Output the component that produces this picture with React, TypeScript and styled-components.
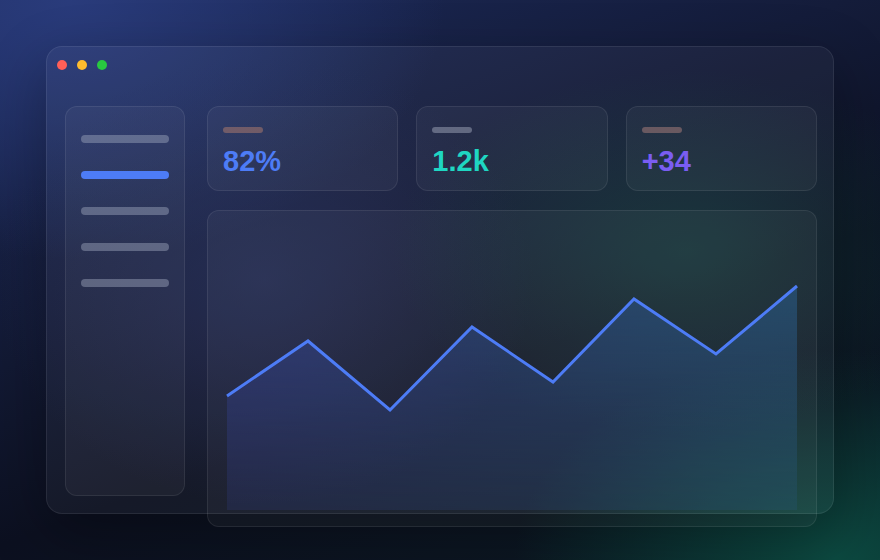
import styled, { createGlobalStyle } from "styled-components";

const GlobalStyle = createGlobalStyle`
  html, body {
    margin: 0;
    padding: 0;
  }
  body {
    font-family: "Liberation Sans", Arial, sans-serif;
  }
`;

const stats = [
  { value: "82%", color: "#4d7cf6", tag: "rgba(170, 120, 110, 0.55)" },
  { value: "1.2k", color: "#1fd6c2", tag: "rgba(160, 165, 185, 0.5)" },
  { value: "+34", color: "#7a5df2", tag: "rgba(175, 130, 125, 0.5)" },
];

const navItems = [false, true, false, false, false];

const points: [number, number][] = [
  [20, 186],
  [101, 131],
  [183, 200],
  [265, 117],
  [346, 172],
  [427, 89],
  [509, 144],
  [590, 76],
];

export default function App() {
  const line = points.map(([x, y]) => `${x},${y}`).join(" ");
  const area = `M20,300 L${line.replace(/ /g, " L")} L590,300 Z`;

  return (
    <>
      <GlobalStyle />
      <Page>
        <Window>
          <TitleBar>
            <Dot $color="#ff5f57" />
            <Dot $color="#febc2e" />
            <Dot $color="#28c840" />
          </TitleBar>
          <Body>
            <Sidebar>
              {navItems.map((active, i) => (
                <NavBar key={i} $active={active} />
              ))}
            </Sidebar>
            <Main>
              <StatRow>
                {stats.map((s) => (
                  <StatCard key={s.value}>
                    <StatTag $color={s.tag} />
                    <StatValue $color={s.color}>{s.value}</StatValue>
                  </StatCard>
                ))}
              </StatRow>
              <ChartCard>
                <svg width="610" height="317" viewBox="0 0 610 317">
                  <defs>
                    <linearGradient id="fillH" x1="0" y1="0" x2="1" y2="0">
                      <stop offset="0" stopColor="#34408a" />
                      <stop offset="1" stopColor="#2a5a86" />
                    </linearGradient>
                    <linearGradient id="fade" x1="0" y1="0" x2="0" y2="1">
                      <stop offset="0" stopColor="#fff" stopOpacity="0.75" />
                      <stop offset="1" stopColor="#fff" stopOpacity="0.2" />
                    </linearGradient>
                    <mask id="fadeMask">
                      <rect x="0" y="0" width="610" height="317" fill="url(#fade)" />
                    </mask>
                  </defs>
                  <path d={area} fill="url(#fillH)" mask="url(#fadeMask)" />
                  <polyline
                    points={line}
                    fill="none"
                    stroke="#4d7cf6"
                    strokeWidth="3"
                    strokeLinejoin="miter"
                  />
                </svg>
              </ChartCard>
            </Main>
          </Body>
        </Window>
      </Page>
    </>
  );
}

const Page = styled.main`
  width: 880px;
  height: 560px;
  box-sizing: border-box;
  padding: 46px;
  overflow: hidden;
  background:
    radial-gradient(ellipse 420px 260px at 78% 45%, rgba(20, 70, 66, 0.55), transparent 70%),
    radial-gradient(ellipse 360px 300px at 30% 50%, rgba(36, 44, 90, 0.6), transparent 75%),
    radial-gradient(ellipse 520px 360px at 8% 0%, rgba(42, 60, 125, 0.95), transparent 72%),
    radial-gradient(ellipse 460px 300px at 95% 100%, rgba(12, 76, 66, 0.95), transparent 70%),
    linear-gradient(160deg, #1e2c5e 0%, #141c3a 35%, #0c1020 62%, #0b1a22 100%);
`;

const Window = styled.section`
  height: 468px;
  box-sizing: border-box;
  border-radius: 16px;
  border: 1px solid rgba(255, 255, 255, 0.08);
  background: rgba(255, 255, 255, 0.04);
  box-shadow: 0 20px 60px rgba(0, 0, 0, 0.3);
`;

const TitleBar = styled.div`
  display: flex;
  align-items: center;
  gap: 10px;
  padding: 12px 10px;
  height: 35px;
  box-sizing: border-box;
`;

const Dot = styled.span<{ $color: string }>`
  width: 10px;
  height: 10px;
  border-radius: 50%;
  background: ${({ $color }) => $color};
`;

const Body = styled.div`
  display: grid;
  grid-template-columns: 120px 610px;
  gap: 22px;
  height: 390px;
  padding: 24px 0 0 18px;
  align-items: start;
`;

const Sidebar = styled.nav`
  height: 390px;
  box-sizing: border-box;
  padding: 28px 15px;
  display: flex;
  flex-direction: column;
  gap: 28px;
  border-radius: 12px;
  border: 1px solid rgba(255, 255, 255, 0.08);
  background: rgba(255, 255, 255, 0.04);
`;

const NavBar = styled.div<{ $active: boolean }>`
  height: 8px;
  border-radius: 4px;
  background: ${({ $active }) =>
    $active ? "#4d7cf6" : "rgba(160, 168, 190, 0.45)"};
`;

const Main = styled.div`
  display: flex;
  flex-direction: column;
  gap: 19px;
`;

const StatRow = styled.div`
  display: grid;
  grid-template-columns: repeat(3, 1fr);
  gap: 18px;
`;

const StatCard = styled.div`
  height: 85px;
  box-sizing: border-box;
  padding: 20px 15px;
  border-radius: 12px;
  border: 1px solid rgba(255, 255, 255, 0.08);
  background: rgba(255, 255, 255, 0.04);
`;

const StatTag = styled.div<{ $color: string }>`
  width: 40px;
  height: 6px;
  border-radius: 3px;
  background: ${({ $color }) => $color};
`;

const StatValue = styled.div<{ $color: string }>`
  margin-top: 12px;
  font-size: 29px;
  font-weight: 700;
  line-height: 32px;
  color: ${({ $color }) => $color};
`;

const ChartCard = styled.div`
  height: 317px;
  box-sizing: border-box;
  border-radius: 12px;
  border: 1px solid rgba(255, 255, 255, 0.08);
  background: rgba(255, 255, 255, 0.04);
  overflow: hidden;

  svg {
    display: block;
    margin: -1px;
  }
`;
